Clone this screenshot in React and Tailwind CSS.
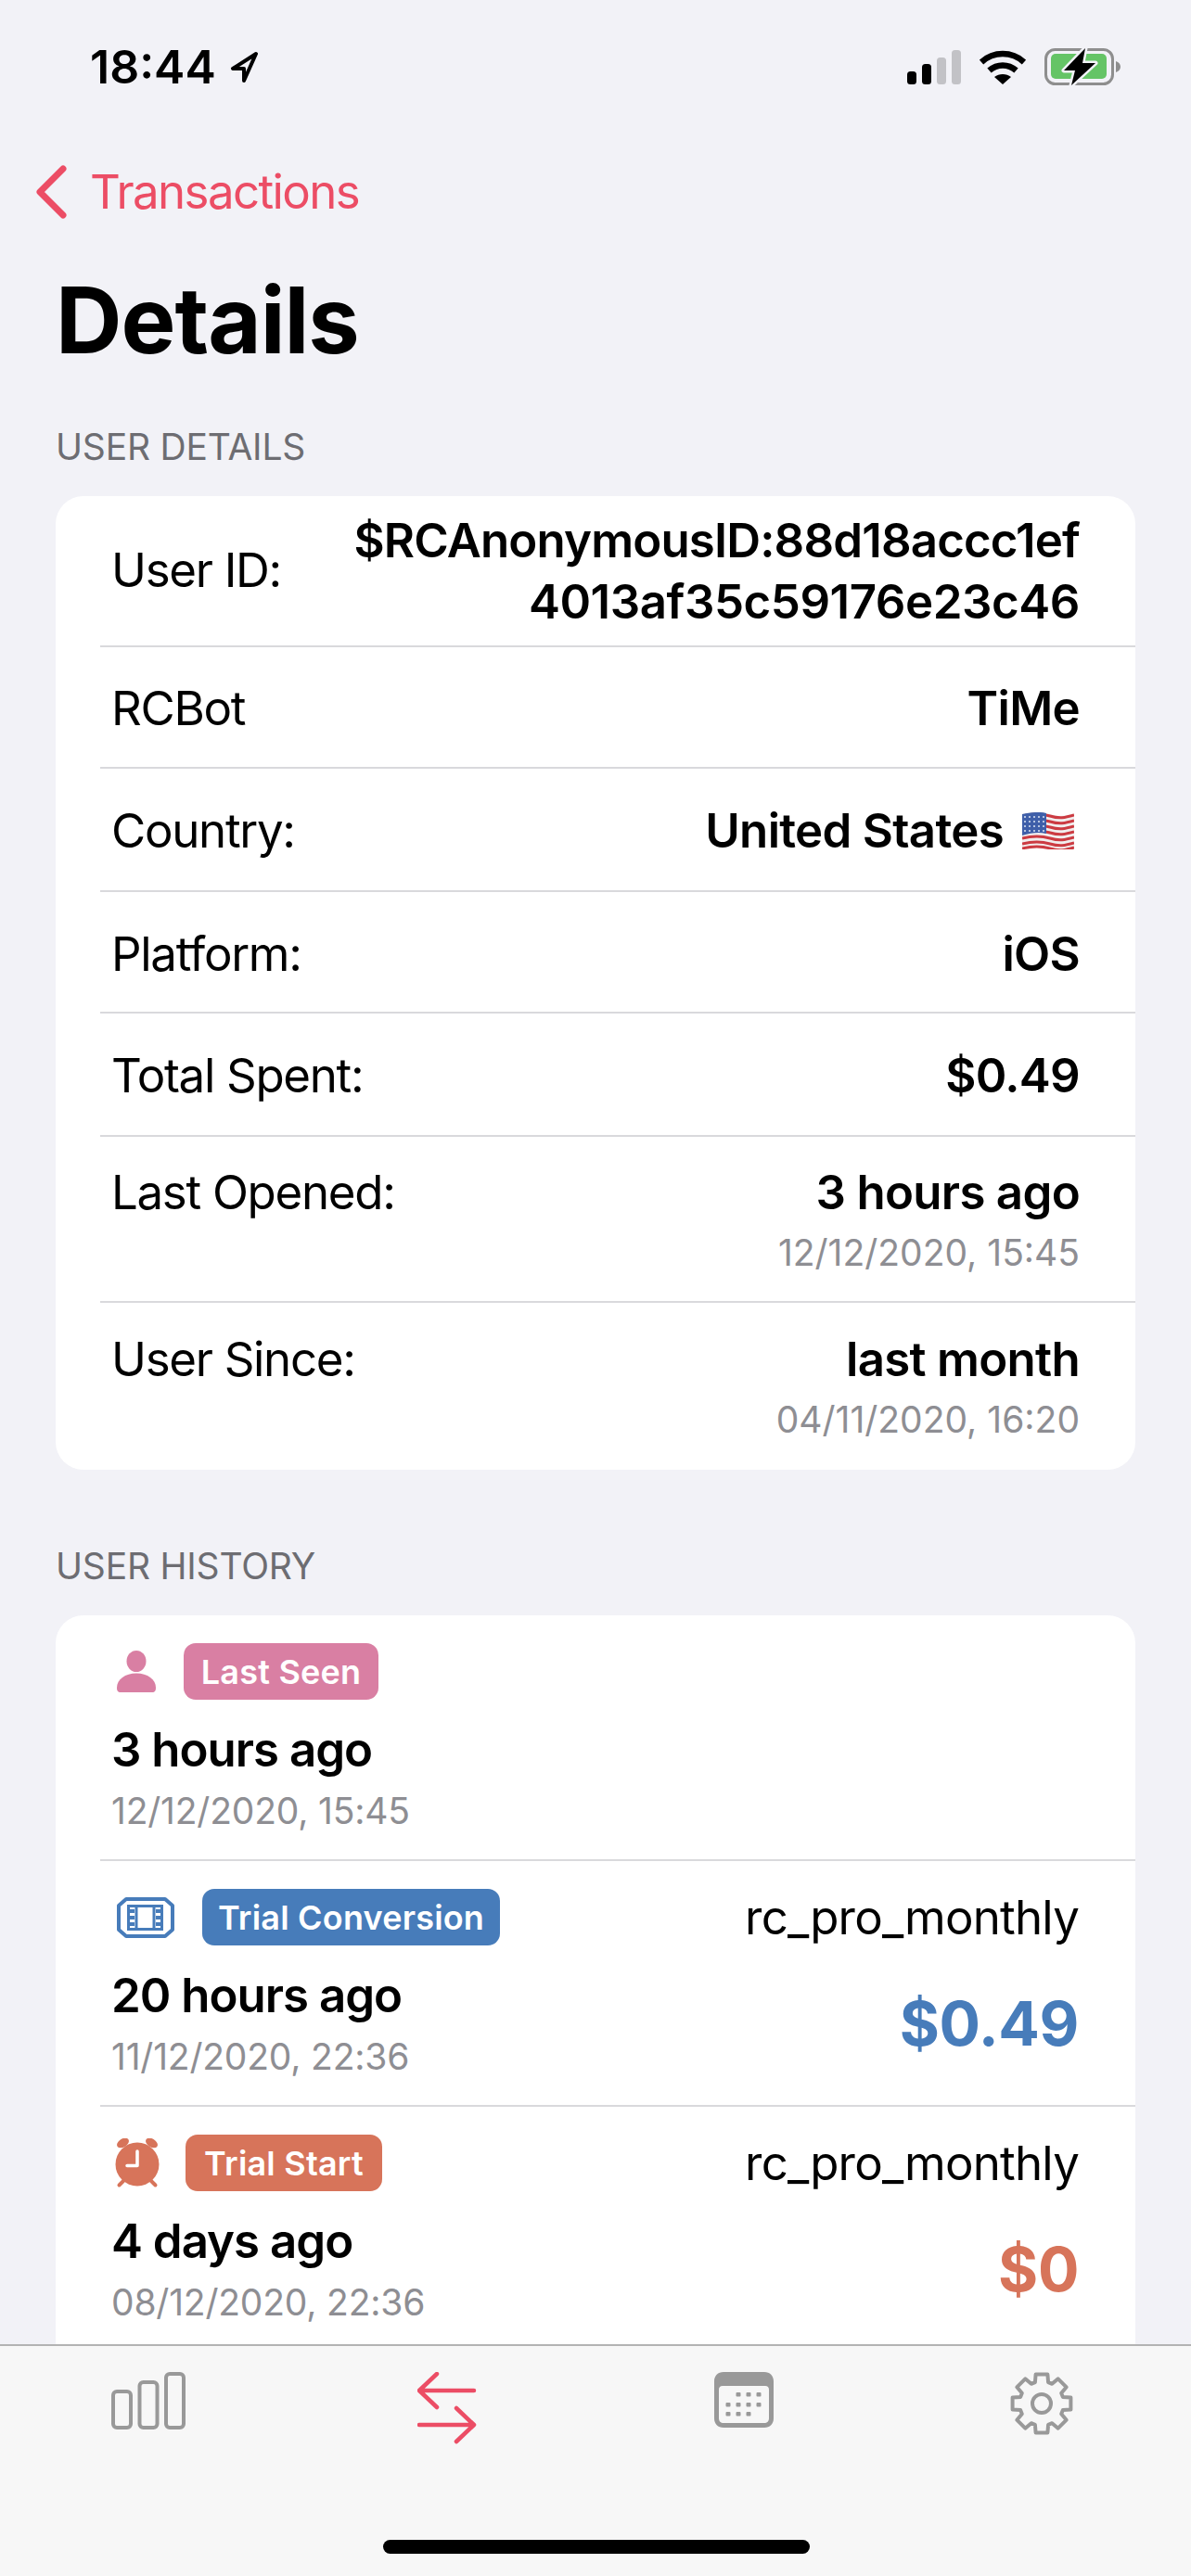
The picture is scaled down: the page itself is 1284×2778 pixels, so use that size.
const gearPath = (() => {
  const cx = 34, cy = 34, n = 8, ro = 32, ri = 24;
  let d = "";
  for (let i = 0; i < n; i++) {
    const a = (i * 2 * Math.PI) / n - Math.PI / 2;
    const pts = [[-0.3, ri], [-0.2, ro], [0.2, ro], [0.3, ri]];
    pts.forEach(([o, r], j) => {
      const x = (cx + r * Math.cos(a + o)).toFixed(1);
      const y = (cy + r * Math.sin(a + o)).toFixed(1);
      d += (i === 0 && j === 0 ? "M" : "L") + x + " " + y + " ";
    });
  }
  return d + "Z";
})();

function Row({ label, value, sub, h, last }) {
  return (
    <div className={`flex justify-between items-start pr-[60px] pl-[12px] ${last ? "" : "border-b-2 border-[#d9d9dc]"} ${h}`}>
      <span className="text-[51px] leading-[66px] tracking-[-1.3px] text-black">{label}</span>
      <div className="flex flex-col items-end">
        {value}
        {sub && <span className="text-[39px] leading-[50px] mt-[7px] text-[#8e8e93]">{sub}</span>}
      </div>
    </div>
  );
}

const V = ({ children }) => <span className="text-[51px] leading-[66px] font-semibold tracking-[-0.7px] text-black">{children}</span>;

function Flag() {
  const wave = (y) => `M0 ${y + 1}C12 ${y - 2} 20 ${y - 2} 30 ${y + 1}S46 ${y + 3} 56 ${y}`;
  const stripes = [3, 9, 15, 21, 27, 33, 38];
  return (
    <svg width="56" height="40" viewBox="0 0 56 40" className="ml-[20px] mr-[6px]">
      <path d="M0 2C12 -1 20 -1 30 2S46 4 56 1V37C46 40 40 38 30 37S12 37 0 40Z" fill="#f1eeee" />
      {stripes.map((y) => (
        <path key={y} d={wave(y)} fill="none" stroke="#cc3b42" strokeWidth="3" />
      ))}
      <path d="M0 2C10 0 18 -1 26 1V23C18 21 10 22 0 25Z" fill="#3f5fa9" />
      {[5, 10, 15, 20].map((y) =>
        [3, 8, 13, 18, 23].map((x) => <circle key={`${x}-${y}`} cx={x} cy={y} r="1" fill="#dfe6f5" />)
      )}
    </svg>
  );
}

function Badge({ children, color, cls }) {
  return (
    <span className={`h-[61px] rounded-[13px] flex items-center justify-center text-white text-[36px] font-semibold tracking-[0.2px] ${color} ${cls}`}>
      {children}
    </span>
  );
}

function Person() {
  return (
    <svg width="42" height="45" viewBox="0 0 42 45" fill="#d97fa3">
      <ellipse cx="21" cy="11.500" rx="10.500" ry="11.500" />
      <path d="M0 40C0 31 9 24.500 21 24.500S42 31 42 40C42 43.500 41 45 38 45H4C1 45 0 43.500 0 40Z" />
    </svg>
  );
}

function Ticket() {
  return (
    <svg width="62" height="44" viewBox="0 0 62 44" fill="none" stroke="#477cba" strokeWidth="4">
      <path d="M10 2H52L60 9V35L52 42H10L2 35V9Z" strokeLinejoin="round" />
      <rect x="12.500" y="9.500" width="36" height="25" strokeWidth="3" />
      <path d="M21 9.500V34.500M40 9.500V34.500" strokeWidth="3" />
      <path d="M14 15H19M14 22H19M14 29H19M42 15H47M42 22H47M42 29H47" strokeWidth="4" />
    </svg>
  );
}

function Alarm() {
  return (
    <svg width="48" height="54" viewBox="0 0 48 54" fill="#d7745a">
      <circle cx="24" cy="28" r="23.500" />
      <ellipse cx="8.500" cy="5" rx="7" ry="4.500" transform="rotate(-32 8.500 5)" />
      <ellipse cx="39.500" cy="5" rx="7" ry="4.500" transform="rotate(32 39.500 5)" />
      <path d="M9 46L4.500 50.500M39 46L43.500 50.500" stroke="#d7745a" strokeWidth="4" strokeLinecap="round" />
      <path d="M24 14V29.500H13" fill="none" stroke="#fff" strokeWidth="3.500" strokeLinecap="round" strokeLinejoin="round" />
    </svg>
  );
}

function HistoryRow({ icon, badge, title, date, product, amount, amountColor, h, last }) {
  return (
    <div className={`flex justify-between pr-[60px] pl-[12px] ${last ? "" : "border-b-2 border-[#d9d9dc]"} ${h}`}>
      <div className="flex flex-col">
        <div className="flex items-center h-[61px] mt-[30px]">
          {icon}
          {badge}
        </div>
        <span className="text-[51px] leading-[66px] font-semibold tracking-[-1px] text-black mt-[21px]">{title}</span>
        <span className="text-[39px] leading-[50px] text-[#8e8e93] tracking-[-0.2px] mt-[8px]">{date}</span>
      </div>
      {product && (
        <div className="flex flex-col items-end mr-[1px]">
          <span className="text-[51px] leading-[66px] text-black mt-[28px] tracking-[-0.8px]">{product}</span>
          <span className={`text-[66px] leading-[82px] font-bold tracking-[-0.4px] mt-[40px] ${amountColor}`}>{amount}</span>
        </div>
      )}
    </div>
  );
}

export default function App() {
  return (
    <div className="relative w-[1284px] h-[2778px] overflow-hidden bg-[#f2f2f7] text-black font-['Inter',sans-serif]">
      {/* status bar */}
      <div className="flex justify-between items-center h-[72px] mt-[36px] pl-[97px] pr-[76px]">
        <div className="flex items-center gap-[14px]">
          <span className="text-[50px] leading-[60px] font-semibold">18:44</span>
          <svg width="32" height="36" viewBox="0 0 32 36" className="mt-[2px]">
            <path d="M29 3L4 19H16V32Z" fill="none" stroke="#000" strokeWidth="4" strokeLinejoin="round" />
          </svg>
        </div>
        <div className="flex items-center gap-[20px]">
          <svg width="58" height="37" viewBox="0 0 58 37">
            <rect x="0" y="23" width="10" height="14" rx="3.500" fill="#000" />
            <rect x="16" y="15" width="10" height="22" rx="3.500" fill="#000" />
            <rect x="32" y="8" width="10" height="29" rx="3.500" fill="#c2c2c6" />
            <rect x="48" y="0" width="10" height="37" rx="3.500" fill="#c2c2c6" />
          </svg>
          <svg width="50" height="37" viewBox="0 0 50 37" fill="none" stroke="#000" strokeWidth="6.500">
            <path d="M2 13C15 1 35 1 48 13" />
            <path d="M10.500 22C19 14.500 31 14.500 39.500 22" />
            <path d="M25 37L16 29C21 25 29 25 34 29Z" fill="#000" stroke="none" />
          </svg>
          <svg width="82" height="40" viewBox="0 0 82 40">
            <rect x="1.500" y="1.500" width="72" height="37" rx="10" fill="none" stroke="#8e8e8e" strokeWidth="3" />
            <rect x="7" y="6" width="60" height="27" rx="5" fill="#65c466" />
            <path d="M77 14C80 15 82 17 82 20C82 23 80 25 77 26Z" fill="#8e8e8e" />
            <path d="M44 0L21 24H33L29 40L55 16H41Z" fill="#000" stroke="#f2f2f7" strokeWidth="5" paintOrder="stroke" strokeLinejoin="round" />
          </svg>
        </div>
      </div>

      {/* nav */}
      <div className="flex items-center mt-[63px] pl-[38px] h-[72px]">
        <svg width="34" height="58" viewBox="0 0 34 58" fill="none" stroke="#ec4d65" strokeWidth="7" strokeLinecap="round" strokeLinejoin="round">
          <path d="M30 4L5 29L30 54" />
        </svg>
        <span className="ml-[25px] text-[51px] leading-[66px] text-[#ec4d65] tracking-[-1.6px]">Transactions</span>
      </div>

      {/* title */}
      <h1 className="mt-[44px] pl-[60px] text-[99px] leading-[116px] font-bold tracking-[-1px]">Details</h1>

      <div className="px-[60px]">
        <div className="mt-[56px] text-[39px] leading-[46px] text-[#6d6d72] tracking-[-0.2px]">USER DETAILS</div>

        <div className="mt-[30px] bg-white rounded-[30px] pl-[48px] overflow-hidden">
          <Row
            h="h-[163px] pt-[15px]"
            label={<span className="block mt-[32px]">User ID:</span>}
            value={
              <span className="text-[51px] leading-[66px] font-semibold text-right">
                <span className="tracking-[-0.85px]">$RCAnonymousID:88d18accc1ef</span>
                <br />
                <span className="tracking-[-0.45px]">4013af35c59176e23c46</span>
              </span>
            }
          />
          <Row h="h-[131px] pt-[33px]" label="RCBot" value={<V>TiMe</V>} />
          <Row
            h="h-[133px] pt-[34px]"
            label="Country:"
            value={
              <span className="flex items-center">
                <V>United States</V>
                <Flag />
              </span>
            }
          />
          <Row h="h-[131px] pt-[34px]" label="Platform:" value={<V>iOS</V>} />
          <Row h="h-[133px] pt-[34px]" label="Total Spent:" value={<V>$0.49</V>} />
          <Row h="h-[179px] pt-[27px]" label="Last Opened:" value={<V>3 hours ago</V>} sub="12/12/2020, 15:45" />
          <Row h="h-[180px] pt-[28px]" last label="User Since:" value={<V>last month</V>} sub="04/11/2020, 16:20" />
        </div>

        <div className="mt-[81px] text-[39px] leading-[46px] text-[#6d6d72] tracking-[-0.2px]">USER HISTORY</div>

        <div className="mt-[30px] bg-white rounded-[30px] pl-[48px] h-[900px] overflow-hidden">
          <HistoryRow
            h="h-[265px]"
            icon={<span className="ml-[6px] mr-[30px] flex"><Person /></span>}
            badge={<Badge color="bg-[#d97fa3]" cls="w-[210px]">Last Seen</Badge>}
            title="3 hours ago"
            date="12/12/2020, 15:45"
          />
          <HistoryRow
            h="h-[265px]"
            icon={<span className="ml-[6px] mr-[30px] flex"><Ticket /></span>}
            badge={<Badge color="bg-[#477cba]" cls="w-[321px]">Trial Conversion</Badge>}
            title="20 hours ago"
            date="11/12/2020, 22:36"
            product="rc_pro_monthly"
            amount="$0.49"
            amountColor="text-[#477cba]"
          />
          <HistoryRow
            h="h-[265px]"
            last
            icon={<span className="ml-[4px] mr-[28px] flex"><Alarm /></span>}
            badge={<Badge color="bg-[#d7745a]" cls="w-[212px]">Trial Start</Badge>}
            title="4 days ago"
            date="08/12/2020, 22:36"
            product="rc_pro_monthly"
            amount="$0"
            amountColor="text-[#d7745a]"
          />
        </div>
      </div>

      {/* tab bar overlays the scrolling content */}
      <div className="absolute left-0 right-0 bottom-0 h-[250px] bg-[#f7f7f7] border-t-2 border-[#b3b3b3]">
        <div className="relative h-full">
          <div className="flex items-start pl-[120px] pt-[28px]">
            <svg width="80" height="62" viewBox="0 0 80 62" fill="none" stroke="#999" strokeWidth="4">
              <rect x="2" y="21" width="19" height="39" rx="4" />
              <rect x="30.500" y="11" width="19" height="49" rx="4" />
              <rect x="59" y="2" width="19" height="58" rx="4" />
            </svg>
            <svg width="64" height="78" viewBox="0 0 64 78" fill="none" stroke="#ec4d65" strokeWidth="4.500" strokeLinecap="round" strokeLinejoin="round" className="ml-[250px]">
              <path d="M2 20H61M21 2L2 20L21 38" />
              <path d="M2 57H61M42 39L61 57L42 75" />
            </svg>
            <svg width="64" height="60" viewBox="0 0 64 60" fill="#999" className="ml-[256px]">
              <path fillRule="evenodd" d="M10 0H54C60 0 64 4 64 10V50C64 56 60 60 54 60H10C4 60 0 56 0 50V10C0 4 4 0 10 0ZM9 15C6.500 15 5 16.500 5 19V50C5 53 7 55 10 55H54C57 55 59 53 59 50V19C59 16.500 57.500 15 55 15Z" />
              {[[26, 22], [37, 22], [48, 22], [15, 33], [26, 33], [37, 33], [48, 33], [15, 43], [26, 43], [37, 43]].map(([x, y]) => (
                <rect key={`${x}-${y}`} x={x - 2.500} y={y} width="5" height="4.500" rx="1" />
              ))}
            </svg>
            <svg width="68" height="68" viewBox="0 0 68 68" fill="none" stroke="#999" strokeWidth="4" strokeLinejoin="round" className="ml-[255px]">
              <path d={gearPath} />
              <circle cx="34" cy="34" r="10" />
            </svg>
          </div>
          <div className="absolute left-[413px] top-[209px] w-[460px] h-[15px] rounded-full bg-black" />
        </div>
      </div>
    </div>
  );
}
